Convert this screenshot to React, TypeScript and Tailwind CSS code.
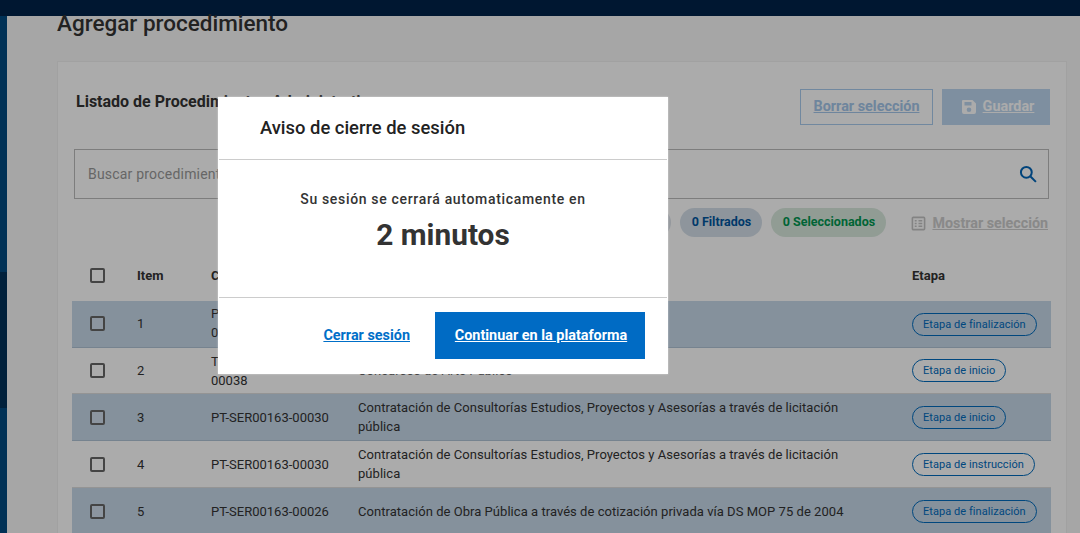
const rows = [
  { n: 1, code: ['PT-SER00163-', '00041'], name: ['Contratación de Servicios'], etapa: 'Etapa de finalización', h: 47 },
  { n: 2, code: ['TR-SER00163-', '00038'], name: ['Concursos de Arte Público'], etapa: 'Etapa de inicio', h: 46 },
  { n: 3, code: ['PT-SER00163-00030'], name: ['Contratación de Consultorías Estudios, Proyectos y Asesorías a través de licitación', 'pública'], etapa: 'Etapa de inicio', h: 47 },
  { n: 4, code: ['PT-SER00163-00030'], name: ['Contratación de Consultorías Estudios, Proyectos y Asesorías a través de licitación', 'pública'], etapa: 'Etapa de instrucción', h: 47 },
  { n: 5, code: ['PT-SER00163-00026'], name: ['Contratación de Obra Pública a través de cotización privada vía DS MOP 75 de 2004'], etapa: 'Etapa de finalización', h: 47 },
]

function Checkbox() {
  return <span className="block w-[15px] h-[15px] border-2 border-[#666] rounded-[2px] bg-white/20" />
}

export default function App() {
  return (
    <div className="relative h-[533px] overflow-hidden bg-[#f8f8f8] font-['Roboto',sans-serif] text-[#222]">
      <div className="h-4 bg-[#002349]" />
      <div className="flex">
        <div className="w-[7px] h-[517px] bg-[#004a80] flex flex-col pt-[256px] shrink-0">
          <div className="h-[136px] bg-[#003158]" />
        </div>
        <main className="flex-1 pl-[50px] pr-[13px] -mt-[6px]">
          <h1 className="text-[22.5px] leading-[26px] font-medium text-[#333] h-[41px]">Agregar procedimiento</h1>
          <section className="border border-[#f0f0f0] bg-white h-[600px] mt-[10px] pt-[27px]">
            <div className="flex justify-between pl-[18px] pr-[16px]">
              <h2 className="text-base leading-[22px] font-bold mt-[2px] text-[#333]">Listado de Procedimientos Administrativos</h2>
              <div className="flex gap-[9px]">
                <button className="h-9 w-[133px] border border-[#a9cbee] text-[#a4c6ea] text-[14.4px] font-bold underline">Borrar selección</button>
                <button className="h-9 w-[108px] pl-[3px] bg-[#bcd6ef] text-white text-[14.4px] font-bold flex items-center justify-center gap-[6px]">
                  <svg width="16" height="16" viewBox="0 0 16 16" fill="white"><path d="M2 1h9.500L15 4.500V13a2 2 0 0 1-2 2H3a2 2 0 0 1-2-2V2a1 1 0 0 1 1-1Zm1.500 2v3.500h7V3ZM8 8.500a2.300 2.300 0 1 0 0 4.600a2.300 2.300 0 0 0 0-4.600Z" fillRule="evenodd" /></svg>
                  <span className="underline">Guardar</span>
                </button>
              </div>
            </div>
            <div className="mt-[24px] ml-4 mr-[17px] h-[50px] border border-[#bbb] flex items-center justify-between pl-[13px] pr-[10px]">
              <span className="text-sm text-[#999] tracking-[0.2px]">Buscar procedimiento</span>
              <svg width="20" height="20" viewBox="0 0 24 24" fill="none" stroke="#0065b8" strokeWidth="2.400"><circle cx="10" cy="10" r="6.500" /><path d="m15 15 6.500 6.500" /></svg>
            </div>
            <div className="mt-[9px] flex justify-end items-center pr-[18px] h-[29px]">
              <span className="h-[29px] w-[82px] rounded-full bg-[#dde3ea]" />
              <span className="ml-[9px] h-[29px] w-[82px] justify-center rounded-full bg-[#d4dfe9] text-[#00559e] text-[12.5px] font-bold flex items-center">0 Filtrados</span>
              <span className="ml-[9px] h-[29px] w-[115px] justify-center rounded-full bg-[#d8e9dd] text-[#009650] text-[12.5px] font-bold flex items-center">0 Seleccionados</span>
              <svg className="ml-[25px] mt-[2px]" width="15" height="15" viewBox="0 0 16 16" fill="none" stroke="#c4c4c4" strokeWidth="1.700"><rect x="1.500" y="1.500" width="13" height="13" rx="1" /><path d="M4 5h2M8 5h4M4 8h2M8 8h4M4 11h2M8 11h4" /></svg>
              <span className="ml-[6px] mt-[2px] text-[14.3px] font-bold underline text-[#ccc]">Mostrar selección</span>
            </div>
            <div className="ml-[14px] mr-[15px] mt-[12px]">
              <div className="flex items-center h-[52px] text-[13px] font-bold text-[#333]">
                <div className="w-[65px] pl-[18px]"><Checkbox /></div>
                <div className="w-[74px] pt-[2px]">Item</div>
                <div className="w-[147px] pt-[2px]">Código</div>
                <div className="w-[554px] pt-[2px]">Procedimiento</div>
                <div className="pt-[2px]">Etapa</div>
              </div>
              {rows.map(r => (
                <div key={r.n} className={`flex items-center border-b text-[13px] leading-[19px] text-[#333] ${r.n % 2 ? 'bg-[#c6d8e9] border-[#b0c3d5]' : 'border-[#ddd]'} ${r.n === 1 ? 'pb-[2px]' : ''}`} style={{ height: r.h }}>
                  <div className="w-[65px] pl-[18px]"><Checkbox /></div>
                  <div className="w-[74px]">{r.n}</div>
                  <div className="w-[147px]">{r.code.map(c => <div key={c}>{c}</div>)}</div>
                  <div className="w-[554px] tracking-[0.04px]">{r.name.map(c => <div key={c}>{c}</div>)}</div>
                  <span className={`h-[23px] px-[10px] rounded-full border border-[#006bbd] text-[#006bbd] text-[11px] tracking-[0.05px] flex items-center ${r.n === 1 ? 'mt-[2px]' : ''}`}>{r.etapa}</span>
                </div>
              ))}
            </div>
          </section>
        </main>
      </div>
      <div className="absolute inset-0 bg-black/33" />
      <div className="absolute left-[218px] top-[97px] w-[450px] h-[277px] bg-white shadow-[0_0_2px_rgba(255,255,255,0.5)] flex flex-col">
        <div className="h-[62px] pl-[42px] flex items-center text-[18.4px] font-medium text-[#222]">Aviso de cierre de sesión</div>
        <div className="mx-px h-px bg-[#ccc]" />
        <div className="h-[137px] text-center text-[#333]">
          <p className="mt-[29px] text-sm leading-[20px] font-medium tracking-[0.67px]">Su sesión se cerrará automaticamente en</p>
          <p className="mt-[8px] text-[29.8px] leading-[36px] font-bold">2 minutos</p>
        </div>
        <div className="mx-px h-px bg-[#ccc]" />
        <div className="flex-1 flex items-center justify-end pr-[23px] gap-[25px] pb-[2px]">
          <a className="mt-[2px] text-[14.4px] font-bold underline text-[#006fc8]">Cerrar sesión</a>
          <button className="h-[47px] w-[210px] pl-[2px] pt-[2px] bg-[#006bc4] text-white text-[14.4px] font-bold underline">Continuar en la plataforma</button>
        </div>
      </div>
    </div>
  )
}
